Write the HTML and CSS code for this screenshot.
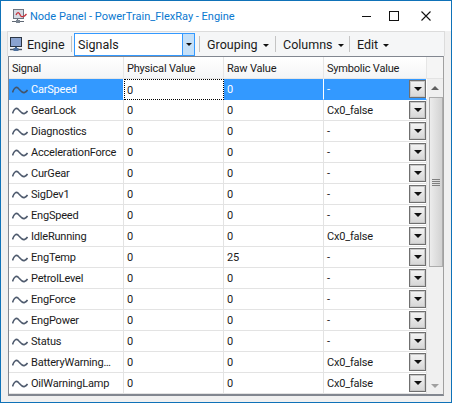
FILE: index.html
```html
<!DOCTYPE html>
<html lang="en">
<head>
  <meta charset="UTF-8">
  <title>Node Panel - PowerTrain_FlexRay - Engine</title>
  <link rel="stylesheet" href="styles.css">
</head>
<body>
  <svg class="defs" width="0" height="0">
    <symbol id="wave" viewBox="0 0 16 10">
      <path d="M0.5 7.500C2 3 4 1.500 6 3C8 5 10 8.500 12.500 7.500C14 6.800 15 5.800 15.500 5" fill="none" stroke="currentColor" stroke-width="1.600"/>
    </symbol>
  </svg>
  <div class="window">
    <div class="titlebar">
      <svg class="title-icon" width="15" height="14" viewBox="0 0 15 14">
        <rect x="1.500" y="0.500" width="10" height="9" fill="#d5d9e2" stroke="#6d7480"/>
        <path d="M5.500 10V12M0 12.500H12" stroke="#5f6874" stroke-width="1.200"/>
        <rect x="4" y="11" width="4" height="3" fill="#7a8490"/>
        <path d="M4 6C5.500 2.500 7 3 8.500 6.500C9.500 8.500 12 8 14.500 5" fill="none" stroke="#c8323c" stroke-width="1.300"/>
      </svg>
      <span class="title">Node Panel - PowerTrain_FlexRay - Engine</span>
      <div class="window-btns">
        <svg width="10" height="10" viewBox="0 0 10 10"><path d="M0 5.500H9" stroke="#111"/></svg>
        <svg width="10" height="10" viewBox="0 0 10 10"><rect x="0.500" y="0.500" width="9" height="9" fill="none" stroke="#111"/></svg>
        <svg width="10" height="10" viewBox="0 0 10 10"><path d="M0.500 0.500L9.500 9.500M9.500 0.500L0.500 9.500" stroke="#111" stroke-width="1.100"/></svg>
      </div>
    </div>

    <div class="toolbar">
      <svg class="tool-icon" width="12" height="14" viewBox="0 0 12 14">
        <rect x="0.500" y="0.500" width="11" height="9" fill="#8aa3d0" stroke="#2c3644"/>
        <rect x="5" y="10" width="2" height="2" fill="#3a5f8c"/>
        <path d="M0 12.500H12" stroke="#4a5664" stroke-width="1.400"/>
        <rect x="3.500" y="11" width="5" height="3" fill="#4d6f9c"/>
      </svg>
      <span class="tool-label">Engine</span>
      <span class="sep"></span>
      <div class="combo">
        <span class="combo-text">Signals</span>
        <span class="combo-arrow"><i class="tri"></i></span>
      </div>
      <span class="sep sep-after-combo"></span>
      <span class="menu menu-grouping">Grouping <i class="tri"></i></span>
      <span class="sep"></span>
      <span class="menu menu-columns">Columns <i class="tri"></i></span>
      <span class="sep"></span>
      <span class="menu">Edit <i class="tri"></i></span>
    </div>

    <div class="grid-wrap">
      <div class="grid">
        <div class="row head">
          <div class="cell c-signal">Signal</div>
          <div class="cell c-num">Physical Value</div>
          <div class="cell c-num">Raw Value</div>
          <div class="cell c-sym">Symbolic Value</div>
        </div>
        <div class="row selected">
          <div class="cell c-signal"><svg class="wave"><use href="#wave"/></svg>CarSpeed</div>
          <div class="cell c-num editing">0</div>
          <div class="cell c-num">0</div>
          <div class="cell c-sym">-<span class="drop"><i class="tri"></i></span></div>
        </div>
        <div class="row">
          <div class="cell c-signal"><svg class="wave"><use href="#wave"/></svg>GearLock</div>
          <div class="cell c-num">0</div>
          <div class="cell c-num">0</div>
          <div class="cell c-sym">Cx0_false<span class="drop"><i class="tri"></i></span></div>
        </div>
        <div class="row">
          <div class="cell c-signal"><svg class="wave"><use href="#wave"/></svg>Diagnostics</div>
          <div class="cell c-num">0</div>
          <div class="cell c-num">0</div>
          <div class="cell c-sym">-<span class="drop"><i class="tri"></i></span></div>
        </div>
        <div class="row">
          <div class="cell c-signal"><svg class="wave"><use href="#wave"/></svg>AccelerationForce</div>
          <div class="cell c-num">0</div>
          <div class="cell c-num">0</div>
          <div class="cell c-sym">-<span class="drop"><i class="tri"></i></span></div>
        </div>
        <div class="row">
          <div class="cell c-signal"><svg class="wave"><use href="#wave"/></svg>CurGear</div>
          <div class="cell c-num">0</div>
          <div class="cell c-num">0</div>
          <div class="cell c-sym">-<span class="drop"><i class="tri"></i></span></div>
        </div>
        <div class="row">
          <div class="cell c-signal"><svg class="wave"><use href="#wave"/></svg>SigDev1</div>
          <div class="cell c-num">0</div>
          <div class="cell c-num">0</div>
          <div class="cell c-sym">-<span class="drop"><i class="tri"></i></span></div>
        </div>
        <div class="row">
          <div class="cell c-signal"><svg class="wave"><use href="#wave"/></svg>EngSpeed</div>
          <div class="cell c-num">0</div>
          <div class="cell c-num">0</div>
          <div class="cell c-sym">-<span class="drop"><i class="tri"></i></span></div>
        </div>
        <div class="row">
          <div class="cell c-signal"><svg class="wave"><use href="#wave"/></svg>IdleRunning</div>
          <div class="cell c-num">0</div>
          <div class="cell c-num">0</div>
          <div class="cell c-sym">Cx0_false<span class="drop"><i class="tri"></i></span></div>
        </div>
        <div class="row">
          <div class="cell c-signal"><svg class="wave"><use href="#wave"/></svg>EngTemp</div>
          <div class="cell c-num">0</div>
          <div class="cell c-num">25</div>
          <div class="cell c-sym">-<span class="drop"><i class="tri"></i></span></div>
        </div>
        <div class="row">
          <div class="cell c-signal"><svg class="wave"><use href="#wave"/></svg>PetrolLevel</div>
          <div class="cell c-num">0</div>
          <div class="cell c-num">0</div>
          <div class="cell c-sym">-<span class="drop"><i class="tri"></i></span></div>
        </div>
        <div class="row">
          <div class="cell c-signal"><svg class="wave"><use href="#wave"/></svg>EngForce</div>
          <div class="cell c-num">0</div>
          <div class="cell c-num">0</div>
          <div class="cell c-sym">-<span class="drop"><i class="tri"></i></span></div>
        </div>
        <div class="row">
          <div class="cell c-signal"><svg class="wave"><use href="#wave"/></svg>EngPower</div>
          <div class="cell c-num">0</div>
          <div class="cell c-num">0</div>
          <div class="cell c-sym">-<span class="drop"><i class="tri"></i></span></div>
        </div>
        <div class="row">
          <div class="cell c-signal"><svg class="wave"><use href="#wave"/></svg>Status</div>
          <div class="cell c-num">0</div>
          <div class="cell c-num">0</div>
          <div class="cell c-sym">-<span class="drop"><i class="tri"></i></span></div>
        </div>
        <div class="row">
          <div class="cell c-signal"><svg class="wave"><use href="#wave"/></svg>BatteryWarning…</div>
          <div class="cell c-num">0</div>
          <div class="cell c-num">0</div>
          <div class="cell c-sym">Cx0_false<span class="drop"><i class="tri"></i></span></div>
        </div>
        <div class="row">
          <div class="cell c-signal"><svg class="wave"><use href="#wave"/></svg>OilWarningLamp</div>
          <div class="cell c-num">0</div>
          <div class="cell c-num">0</div>
          <div class="cell c-sym">Cx0_false<span class="drop"><i class="tri"></i></span></div>
        </div>
      </div>
      <div class="scrollbar">
        <div class="scroll-corner"></div>
        <div class="scroll-btn"><i class="up"></i></div>
        <div class="track">
          <div class="thumb"><span class="grip"></span></div>
        </div>
        <div class="scroll-btn"><i class="down"></i></div>
      </div>
    </div>
  </div>
</body>
</html>
```

FILE: styles.css
```css
* {
  box-sizing: border-box;
}
html, body {
  margin: 0;
  height: 100%;
}
body {
  font-family: "Roboto", "Noto Sans", sans-serif;
  font-size: 11px;
  color: #1a1a1a;
  overflow: hidden;
}
.defs {
  display: block;
  height: 0;
}
.window {
  width: 452px;
  height: 403px;
  background: #f0f0f0;
  border: 1px solid #0f72b8;
  display: flex;
  flex-direction: column;
}
.titlebar {
  height: 30px;
  background: #fff;
  display: flex;
  align-items: center;
  padding-left: 11px;
}
.title {
  margin-left: 3px;
  font-size: 11px;
  color: #0a78cf;
}
.window-btns {
  margin-left: auto;
  display: flex;
  gap: 17px;
  padding-right: 20px;
}
.window-btns svg + svg + svg {
  margin-left: 5px;
}
.toolbar {
  height: 25px;
  margin: 0 6px;
  background: #f5f6f7;
  display: flex;
  align-items: center;
  border: 1px solid #dcdcdc;
  border-bottom: 0;
  padding-left: 2px;
  font-size: 12.500px;
}
.tool-label {
  margin-left: 5px;
  width: 44px;
}
.sep {
  width: 1px;
  height: 16px;
  background: #c4c4c4;
  flex: none;
}
.combo {
  width: 121px;
  height: 23px;
  margin: 0 4px 0 2px;
  border: 1px solid #3399ff;
  background: #fff;
  display: flex;
  align-items: center;
  justify-content: space-between;
  padding-left: 3px;
}
.combo-arrow {
  width: 12px;
  height: 21px;
  background: #c5e0f8;
  border-left: 1px solid #3399ff;
  display: flex;
  align-items: center;
  justify-content: center;
}
.combo-arrow .tri {
  margin: 0;
}
.menu {
  padding: 0 7px;
  white-space: nowrap;
}
.menu-grouping {
  width: 75px;
}
.menu-columns {
  width: 73px;
}
.tri {
  display: inline-block;
  width: 0;
  height: 0;
  border-left: 3px solid transparent;
  border-right: 3px solid transparent;
  border-top: 3px solid #111;
  vertical-align: middle;
  margin-left: 2px;
}
.grid-wrap {
  margin: 0 7px;
  height: 340px;
  display: flex;
  border: 1px solid #828790;
  border-bottom-width: 2px;
  border-right-color: #a0a0a0;
  background: #fff;
}
.grid {
  width: 418px;
  overflow: hidden;
  letter-spacing: -0.2px;
}
.row {
  display: flex;
  height: 21px;
}
.head {
  height: 22px;
  background: linear-gradient(#ffffff, #fbfbfb 40%, #f3f4f6);
}
.cell {
  display: flex;
  align-items: center;
  border-right: 1px solid #e3e3e3;
  border-bottom: 1px solid #e3e3e3;
  padding: 1px 0 0 3px;
  white-space: nowrap;
  overflow: hidden;
}
.head .cell {
  border-color: #e6e6e6;
}
.c-signal {
  width: 115px;
}
.c-num {
  width: 100px;
}
.c-sym {
  width: 103px;
  position: relative;
}
.wave {
  width: 16px;
  height: 10px;
  margin-right: 3px;
  flex: none;
  color: #4f5b6e;
}
.selected .cell {
  background: #3399ff;
  color: #fff;
  border-right-color: #fff;
  border-bottom-color: #3399ff;
}
.selected .wave {
  color: #44546a;
}
.selected .editing {
  background: #fff;
  color: #1a1a1a;
  border: 1px dotted #000;
  padding-left: 2px;
}
.drop {
  position: absolute;
  right: 0;
  top: 1px;
  width: 17px;
  height: 18px;
  border: 1px solid #6f6f6f;
  box-shadow: inset 0 0 0 1px #c8c8c8;
  background: linear-gradient(#f4f4f4, #d6d6d6);
  display: flex;
  align-items: center;
  justify-content: center;
}
.drop .tri {
  margin: 0;
  border-left-width: 4px;
  border-right-width: 4px;
  border-top-width: 4px;
}
.scrollbar {
  flex: 1;
  display: flex;
  flex-direction: column;
  background: #f0f0f0;
}
.scroll-corner {
  height: 22px;
  background: #f5f5f5;
  border-bottom: 1px solid #e3e3e3;
}
.scroll-btn {
  height: 17px;
  display: flex;
  align-items: center;
  justify-content: center;
}
.up, .down {
  width: 0;
  height: 0;
  border-left: 4px solid transparent;
  border-right: 4px solid transparent;
}
.up {
  border-bottom: 4px solid #606060;
}
.down {
  border-top: 4px solid #a0a0a0;
}
.track {
  flex: 1;
}
.thumb {
  height: 170px;
  margin: 1px 0 0 2px;
  background: linear-gradient(90deg, #ececec, #d2d2d2);
  border: 1px solid #acacac;
  display: flex;
  align-items: center;
  justify-content: center;
}
.grip {
  width: 8px;
  height: 7px;
  background: repeating-linear-gradient(#808080 0 1px, transparent 1px 2px);
}
```
